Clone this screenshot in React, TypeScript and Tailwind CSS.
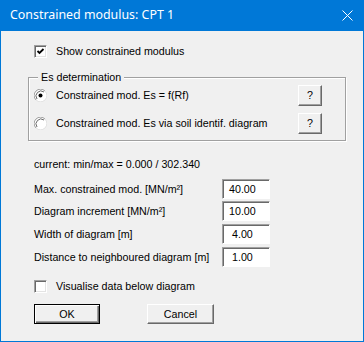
import React from "react";

const face = "font-['Liberation_Sans',Arial,sans-serif] text-[10.7px] text-black";

function CheckBox({ checked }: { checked?: boolean }) {
  return (
    <span className="flex h-[13px] w-[13px] shrink-0 items-center justify-center border border-t-[#a0a0a0] border-l-[#a0a0a0] border-r-white border-b-white bg-white shadow-[inset_1px_1px_0_#696969,inset_-1px_-1px_0_#e3e3e3]">
      {checked && (
        <svg width="9" height="9" viewBox="0 0 9 9">
          <path d="M1.5 4 L3.5 6 L7.5 2" fill="none" stroke="#000" strokeWidth="1.8" />
        </svg>
      )}
    </span>
  );
}

function Radio({ on }: { on?: boolean }) {
  return (
    <svg width="13" height="13" viewBox="0 0 13 13" className="shrink-0">
      <circle cx="6.5" cy="6.5" r="6" fill="#fff" />
      <path d="M11 2 A6 6 0 0 0 2 11" fill="none" stroke="#a0a0a0" strokeWidth="1" />
      <path d="M10 3 A5 5 0 0 0 3 10" fill="none" stroke="#696969" strokeWidth="1" />
      <path d="M2 11 A6 6 0 0 0 11 2" fill="none" stroke="#e3e3e3" strokeWidth="1" />
      {on && <circle cx="6.5" cy="6.5" r="2" fill="#000" />}
    </svg>
  );
}

function HelpButton() {
  return (
    <button className="flex h-[21px] w-[24px] items-center justify-center border border-t-white border-l-white border-r-[#696969] border-b-[#696969] bg-[#f0f0f0] shadow-[inset_-1px_-1px_0_#a0a0a0]">
      ?
    </button>
  );
}

function Field({ label, value }: { label: string; value: string }) {
  return (
    <div className="flex h-[20px] items-center">
      <span className="w-[188px]">{label}</span>
      <div className="flex h-[20px] w-[48px] items-center whitespace-pre border border-t-[#a0a0a0] border-l-[#a0a0a0] border-r-white border-b-white bg-white pl-[6px] shadow-[inset_1px_1px_0_#696969]">
        {value}
      </div>
    </div>
  );
}

export default function App() {
  return (
    <div className={`flex h-[342px] w-[364px] flex-col bg-[#0078d7] ${face}`}>
      {/* Titelleiste */}
      <div className="flex h-[31px] items-center justify-between pl-[10px] pr-[11px] font-['Noto_Sans',sans-serif] text-[12.4px] text-white">
        <span>Constrained modulus: CPT 1</span>
        <svg width="11" height="11" viewBox="0 0 11 11">
          <path d="M0.5 0.5 L10.5 10.5 M10.5 0.5 L0.5 10.5" stroke="#fff" strokeWidth="1" />
        </svg>
      </div>

      <div className="mx-px mb-px flex flex-1 flex-col bg-[#f0f0f0] pt-[14px]">
        <label className="ml-[33px] flex h-[13px] items-center gap-[9px]">
          <CheckBox checked />
          <span>Show constrained modulus</span>
        </label>

        {/* Es determination */}
        <div className="relative ml-[27px] mt-[19px] flex h-[64px] w-[318px] flex-col gap-[7px] border border-[#a0a0a0] pl-[5px] pr-[23px] pt-[7px] shadow-[inset_1px_1px_0_#fff,1px_1px_0_#fff]">
          <span className="absolute left-[9px] top-[-8px] bg-[#f0f0f0] px-[3px] leading-[14px]">Es determination</span>
          <div className="flex h-[21px] items-center">
            <Radio on />
            <span className="ml-[9px] flex-1">Constrained mod. Es = f(Rf)</span>
            <HelpButton />
          </div>
          <div className="flex h-[21px] items-center">
            <Radio />
            <span className="ml-[9px] flex-1">Constrained mod. Es via soil identif. diagram</span>
            <HelpButton />
          </div>
        </div>

        <div className="ml-[33px] mt-[17px] flex h-[13px] items-center">current: min/max = 0.000 / 302.340</div>

        <div className="ml-[33px] mt-[8px] flex flex-col">
          <Field label="Max. constrained mod. [MN/m²]" value="40.00" />
          <div className="mt-[2px]">
            <Field label="Diagram increment [MN/m²]" value="10.00" />
          </div>
          <div className="mt-[3px]">
            <Field label="Width of diagram [m]" value=" 4.00" />
          </div>
          <div className="mt-[3px]">
            <Field label="Distance to neighboured diagram [m]" value=" 1.00" />
          </div>
        </div>

        <label className="ml-[33px] mt-[13px] flex h-[13px] items-center gap-[9px]">
          <CheckBox />
          <span>Visualise data below diagram</span>
        </label>

        <div className="ml-[33px] mt-[11px] flex gap-[47px]">
          <button className="h-[20px] w-[66px] border border-black bg-[#f0f0f0] shadow-[inset_1px_1px_0_#fff,inset_-1px_-1px_0_#696969,inset_-2px_-2px_0_#a0a0a0]">
            OK
          </button>
          <button className="h-[20px] w-[67px] border border-t-white border-l-white border-r-[#696969] border-b-[#696969] bg-[#f0f0f0] shadow-[inset_-1px_-1px_0_#a0a0a0]">
            Cancel
          </button>
        </div>
      </div>
    </div>
  );
}
